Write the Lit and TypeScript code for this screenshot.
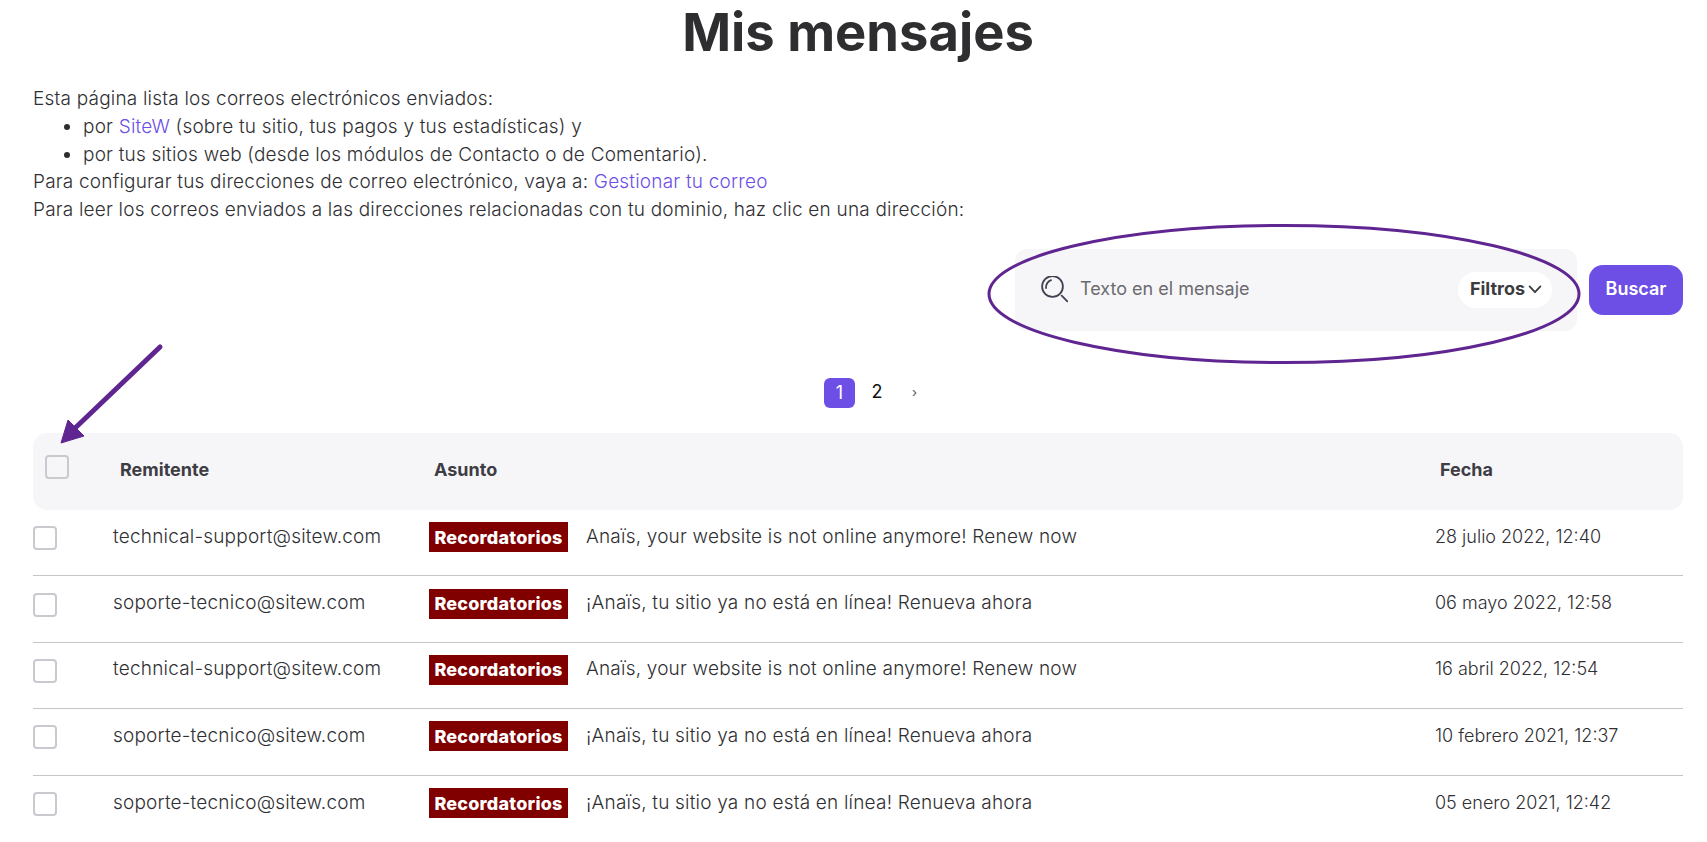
import { LitElement, html, css } from "lit";
import { customElement } from "lit/decorators.js";

const ROWS = [
  ["technical-support@sitew.com", "Anaïs, your website is not online anymore! Renew now", "28 julio 2022, 12:40"],
  ["soporte-tecnico@sitew.com", "¡Anaïs, tu sitio ya no está en línea! Renueva ahora", "06 mayo 2022, 12:58"],
  ["technical-support@sitew.com", "Anaïs, your website is not online anymore! Renew now", "16 abril 2022, 12:54"],
  ["soporte-tecnico@sitew.com", "¡Anaïs, tu sitio ya no está en línea! Renueva ahora", "10 febrero 2021, 12:37"],
  ["soporte-tecnico@sitew.com", "¡Anaïs, tu sitio ya no está en línea! Renueva ahora", "05 enero 2021, 12:42"],
];

@customElement("app-root")
export class AppRoot extends LitElement {
  static styles = css`
    :host {
      display: block;
      position: relative;
      height: 842px;
      overflow: hidden;
      background: #fff;
      color: #2f2f33;
      font-family: "Inter", "Liberation Sans", sans-serif;
      font-weight: 300;
      font-size: 19px;
      letter-spacing: 0.2px;
    }
    .page { padding: 0 24px 0 33px; }
    h1 {
      margin: 0;
      height: 85px;
      line-height: 64px;
      text-align: center;
      font-size: 52.5px;
      font-weight: 700;
      letter-spacing: 0;
      color: #2e2e30;
    }
    .intro { line-height: 27.8px; }
    .intro ul { margin: 0; padding: 0 0 0 50px; }
    a { color: #6d4fe6; text-decoration: none; }
    .searchrow {
      display: flex;
      justify-content: flex-end;
      align-items: center;
      gap: 12px;
      margin-top: 25px;
    }
    .search {
      width: 562px;
      height: 82px;
      box-sizing: border-box;
      padding: 0 25px 0 25px;
      background: #f6f6f8;
      border-radius: 12px;
      display: flex;
      align-items: center;
    }
    .placeholder { flex: 1; margin-left: 12px; padding-bottom: 2px; color: #6b6b6f; font-weight: 400; font-size: 18px; letter-spacing: 0; }
    .filters {
      width: 94px;
      height: 36px;
      box-sizing: border-box;
      padding-left: 2px;
      border-radius: 18px;
      background: #fff;
      display: flex;
      align-items: center;
      justify-content: center;
      gap: 3px;
      font-weight: 700;
      font-size: 18px;
      letter-spacing: 0;
      color: #3b3b40;
    }
    .filters span { padding-bottom: 2px; }
    .buscar {
      width: 94px;
      height: 50px;
      box-sizing: border-box;
      padding-bottom: 2px;
      border-radius: 14px;
      background: #6d4fe6;
      color: #fff;
      font-weight: 600;
      font-size: 18px;
      letter-spacing: 0;
      display: flex;
      align-items: center;
      justify-content: center;
    }
    .pager {
      display: flex;
      justify-content: center;
      align-items: center;
      margin-top: 47px;
      padding-left: 26px;
      height: 30px;
      color: #111;
      font-weight: 400;
      font-size: 18px;
      letter-spacing: 0;
    }
    .pager .cur {
      width: 31px;
      height: 30px;
      box-sizing: border-box;
      padding-bottom: 1px;
      border-radius: 6px;
      background: #6d4fe6;
      color: #fff;
      display: flex;
      align-items: center;
      justify-content: center;
    }
    .pager .two { margin-left: 16px; width: 12px; text-align: center; padding-bottom: 2px; }
    .pager .next { margin-left: 29px; font-size: 13px; width: 6px; color: #555; padding-bottom: 2px; }
    .thead {
      display: grid;
      grid-template-columns: 75px 314px 1006px 1fr;
      padding-left: 12px;
      margin-top: 25px;
      height: 77px;
      box-sizing: border-box;
      background: #f6f6f8;
      border-radius: 14px;
      align-items: center;
      font-weight: 700;
      font-size: 18px;
      letter-spacing: 0;
      color: #3e3c44;
    }
    .thead .box { transform: translateY(-4px); background: transparent; }
    .thead .h { padding-bottom: 3px; }
    .row {
      display: grid;
      grid-template-columns: 80px 316px 157px 849px 1fr;
      align-items: center;
      height: 66.4px;
      box-sizing: border-box;
      padding-bottom: 11px;
      border-bottom: 1px solid #c4c4c9;
    }
    .row:last-child { border-bottom: none; }
    .row .box { transform: translateY(1px); }
    .cell { padding-bottom: 2px; }
    .date { font-size: 18px; letter-spacing: 0; }
    .box {
      width: 24px;
      height: 24px;
      box-sizing: border-box;
      border: 2px solid #c9c9cf;
      border-radius: 4px;
      background: #fff;
      display: block;
    }
    .badge {
      width: 139px;
      height: 30px;
      background: #800000;
      color: #fff;
      font-weight: 800;
      font-size: 18px;
      letter-spacing: 0.2px;
      display: flex;
      align-items: center;
      justify-content: center;
    }
    .overlay { position: absolute; left: 0; top: 0; pointer-events: none; }
  `;

  render() {
    return html`
      <div class="page">
        <h1>Mis mensajes</h1>
        <div class="intro">
          Esta página lista los correos electrónicos enviados:
          <ul>
            <li>por <a>SiteW</a> (sobre tu sitio, tus pagos y tus estadísticas) y</li>
            <li>por tus sitios web (desde los módulos de Contacto o de Comentario).</li>
          </ul>
          Para configurar tus direcciones de correo electrónico, vaya a: <a>Gestionar tu correo</a><br />
          Para leer los correos enviados a las direcciones relacionadas con tu dominio, haz clic en una dirección:
        </div>
        <div class="searchrow">
          <div class="search">
            <svg width="28" height="28" viewBox="0 0 28 28" fill="none" stroke="#3f4050" stroke-width="1.8" stroke-linecap="round">
              <circle cx="12.5" cy="10.5" r="10.4"></circle>
              <path d="M6 12C5.8 8.5 8 5 11 4.2"></path>
              <path d="M21.7 19.7L27.3 25.3"></path>
            </svg>
            <span class="placeholder">Texto en el mensaje</span>
            <div class="filters">
              <span>Filtros</span>
              <svg width="14" height="9" viewBox="0 0 15 10" fill="none" stroke="#3b3b40" stroke-width="2" stroke-linecap="round" stroke-linejoin="round">
                <path d="M1.5 1.5L7.5 8L13.5 1.5"></path>
              </svg>
            </div>
          </div>
          <div class="buscar">Buscar</div>
        </div>
        <div class="pager">
          <span class="cur">1</span><span class="two">2</span><span class="next">›</span>
        </div>
        <div class="thead">
          <span class="box"></span><span class="h">Remitente</span><span class="h">Asunto</span><span class="h">Fecha</span>
        </div>
        ${ROWS.map(
          (r) => html`<div class="row">
            <span class="box"></span>
            <span class="cell">${r[0]}</span>
            <span class="badge">Recordatorios</span>
            <span class="cell">${r[1]}</span>
            <span class="cell date">${r[2]}</span>
          </div>`
        )}
      </div>
      <svg class="overlay" width="1707" height="842" fill="none">
        <ellipse cx="1284" cy="294" rx="295" ry="68.5" stroke="#5f2590" stroke-width="3"></ellipse>
        <path d="M160 347L72 431" stroke="#5f2590" stroke-width="5" stroke-linecap="round"></path>
        <path d="M61 443L68 420L84 436Z" fill="#5f2590" stroke="#5f2590"></path>
      </svg>
    `;
  }
}
